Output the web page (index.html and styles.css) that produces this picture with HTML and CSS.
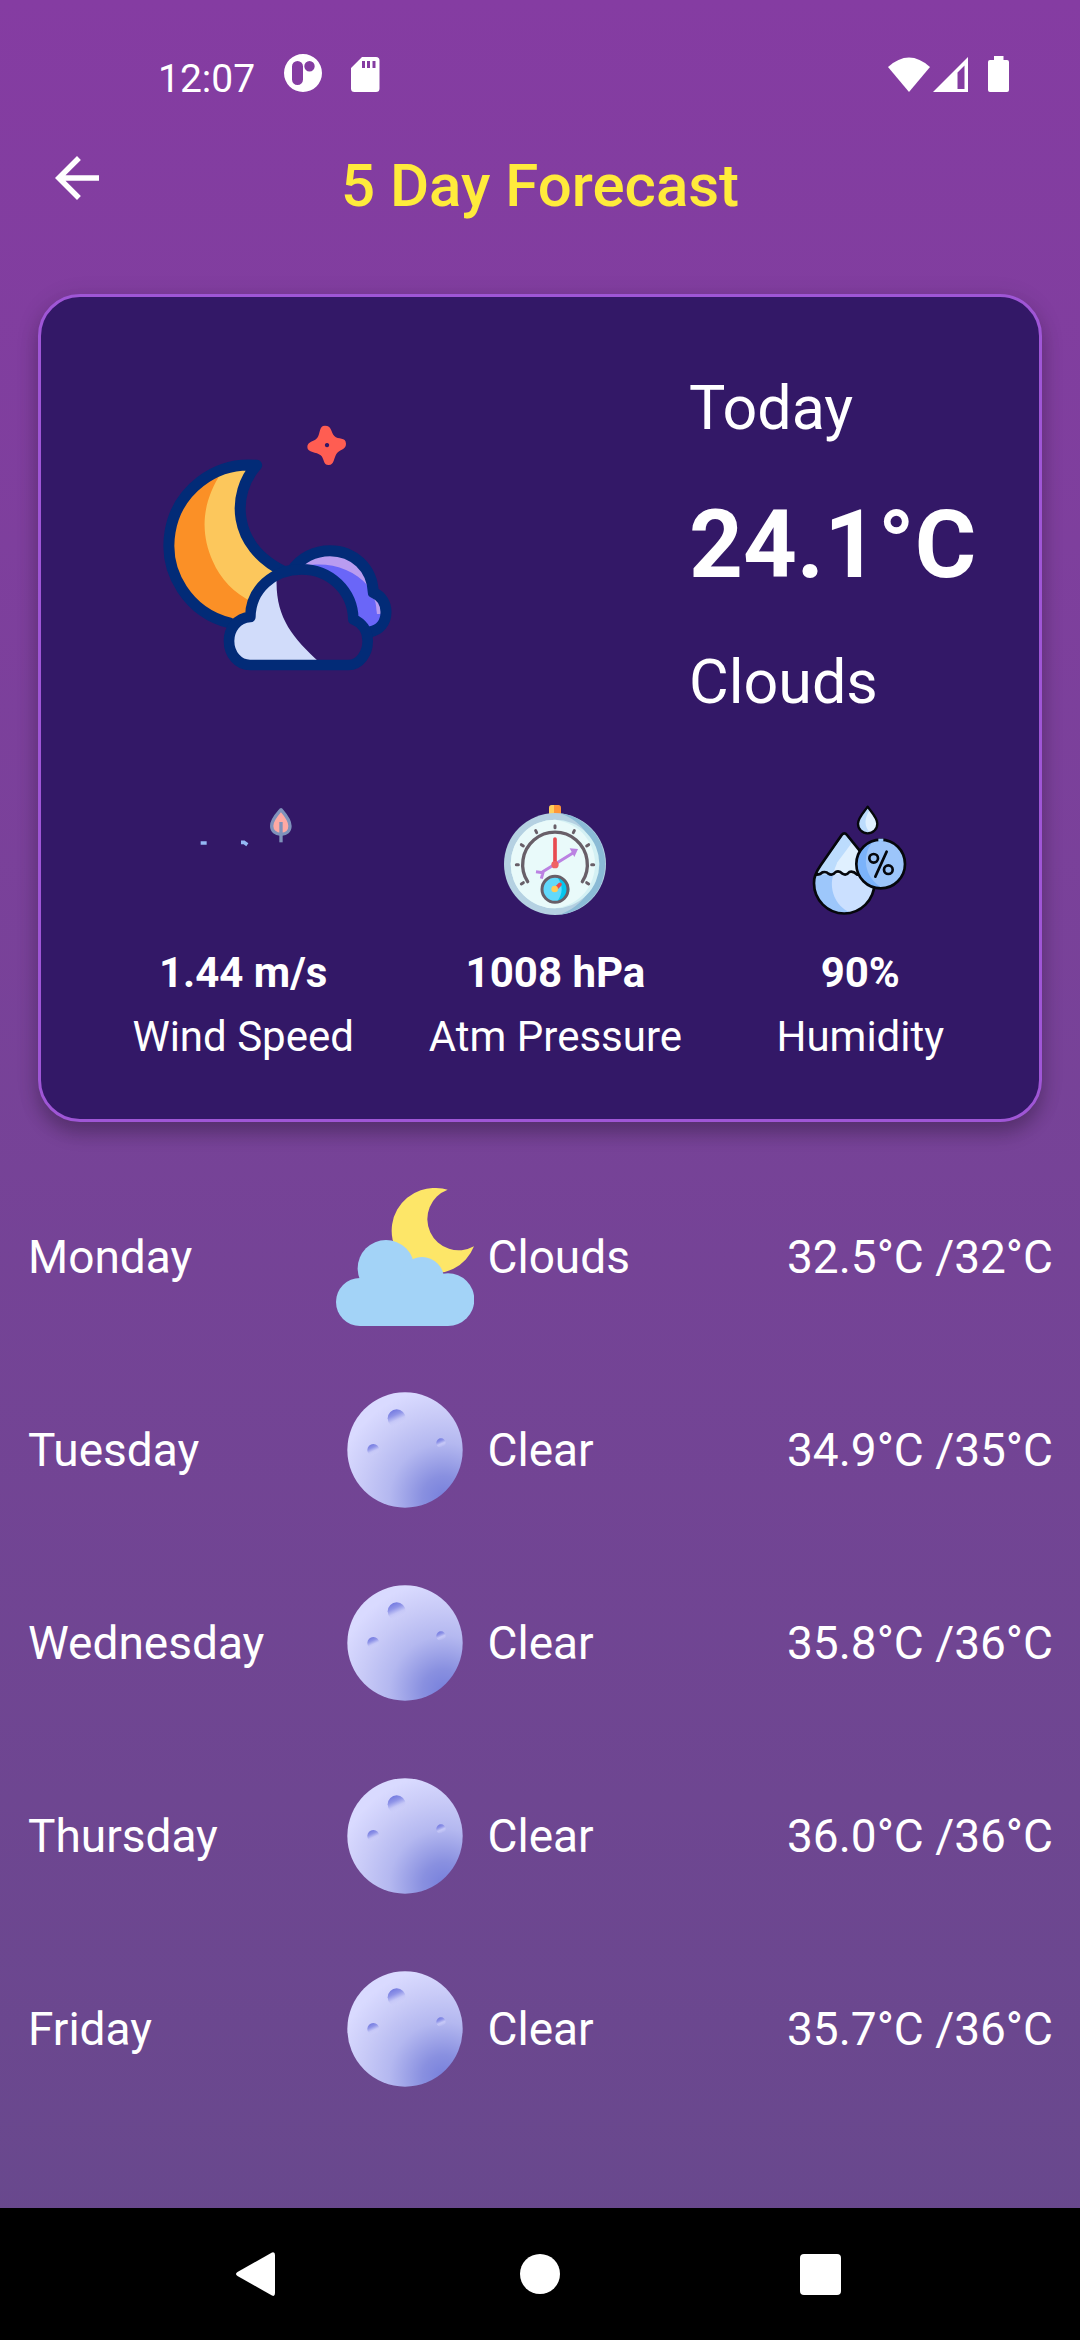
FILE: index.html
```html
<!DOCTYPE html>
<html lang="en">
<head>
  <meta charset="utf-8">
  <meta name="viewport" content="width=device-width, initial-scale=1">
  <title>5 Day Forecast</title>
  <link rel="stylesheet" href="styles.css">
</head>
<body>
  <svg class="sprite" aria-hidden="true">
    <defs>
      <radialGradient id="moon-shade" gradientUnits="userSpaceOnUse" cx="370" cy="985" r="330">
        <stop offset="0" stop-color="#7780dc"/>
        <stop offset="0.2" stop-color="#8990e0"/>
        <stop offset="0.5" stop-color="#b4b8f0"/>
        <stop offset="0.75" stop-color="#c8caf7"/>
        <stop offset="1" stop-color="#d9daff"/>
      </radialGradient>
      <linearGradient id="crater-shade" x1="0.25" y1="0" x2="0.65" y2="0.9">
        <stop offset="0" stop-color="#6f76df"/>
        <stop offset="0.35" stop-color="#8f94e8"/>
        <stop offset="0.65" stop-color="#c5c7f7"/>
        <stop offset="1" stop-color="#cfd0fa" stop-opacity="0"/>
      </linearGradient>
      <symbol id="full-moon" viewBox="45 634 414 414">
        <circle cx="252" cy="841" r="173" fill="url(#moon-shade)"/>
        <circle cx="227" cy="746" r="27" fill="url(#crater-shade)"/>
        <circle cx="157" cy="841" r="18" fill="url(#crater-shade)"/>
        <circle cx="360" cy="820" r="14" fill="url(#crater-shade)"/>
      </symbol>
    </defs>
  </svg>

  <div class="status-bar">
    <div class="status-group status-left">
      <span class="status-time">12:07</span>
      <svg width="40" height="38" viewBox="0 0 40 38" aria-hidden="true">
        <path fill="#fff" fill-rule="evenodd" d="M20 0a19 19 0 1 1 0 38a19 19 0 1 1 0-38zM14.500 7a5.500 5.500 0 0 0-5.500 5.500v13a5.500 5.500 0 0 0 11 0v-13a5.500 5.500 0 0 0-5.500-5.500zM26.500 7a5.200 5.200 0 1 0 0 10.400a5.200 5.200 0 1 0 0-10.400z"/>
      </svg>
      <svg width="29" height="35" viewBox="0 0 29 35" aria-hidden="true">
        <path fill="#fff" fill-rule="evenodd" d="M11 0H25a3.500 3.500 0 0 1 3.500 3.500v28a3.500 3.500 0 0 1-3.500 3.500H3.500a3.500 3.500 0 0 1-3.500-3.500V11zM11 4v7h3V4zM16 4v7h3V4zM21.500 4v7h3V4z"/>
      </svg>
    </div>
    <div class="status-group status-right">
      <svg width="42" height="35" viewBox="0 0 42 35" aria-hidden="true"><path fill="#fff" d="M0 10Q21-9 42 10L21 35z"/></svg>
      <svg width="36" height="35" viewBox="0 0 36 35" aria-hidden="true"><path fill="#fff" fill-rule="evenodd" d="M0 35L35 0v35zM24.500 15.500V32H31.500V8.500z"/></svg>
      <svg class="battery" width="22" height="36" viewBox="0 0 22 36" aria-hidden="true"><path fill="#fff" d="M6 0h9.500v4H19a2 2 0 0 1 2 2v28a2 2 0 0 1-2 2H2a2 2 0 0 1-2-2V6a2 2 0 0 1 2-2h4z"/></svg>
    </div>
  </div>

  <header class="app-bar">
    <button class="back-button" type="button" aria-label="Back">
      <svg width="66" height="66" viewBox="0 0 24 24" aria-hidden="true"><path fill="#fff" d="M20 11H7.830l5.590-5.590L12 4l-8 8 8 8 1.410-1.410L7.830 13H20v-2z"/></svg>
    </button>
    <h1 class="title">5 Day Forecast</h1>
  </header>

  <main class="content">
    <section class="today-card" aria-label="Today">
      <div class="summary">
        <svg class="summary-icon" width="280" height="280" viewBox="0 -13 840 840" aria-hidden="true">
          <defs>
            <clipPath id="crescent"><path d="M350 168C280 250 270 400 435 488L400 680L270 642A240.500 240.500 0 0 1 350 168z"/></clipPath>
          </defs>
          <g clip-path="url(#crescent)">
            <path fill="#fb9026" d="M60 140H480V700H60z"/>
            <path fill="#fcc75c" d="M244 190C185 280 180 370 218 455C242 510 280 550 340 580L480 500L400 150z"/>
          </g>
          <path fill="none" stroke="#022b77" stroke-width="33" stroke-linejoin="round" stroke-linecap="round" d="M270 641A240.500 240.500 0 0 1 350 168C275 250 272 410 435 488"/>
          <path fill="#b99cf0" d="M455 485C480 445 525 424 570 424C640 424 697 475 700 548C725 560 738 582 738 608C738 640 718 662 690 668L600 560z"/>
          <path fill="#6a66f8" d="M490 470C560 455 640 475 684 530L688 562L703 570C710 585 708 600 711 614H735L712 670L660 660L600 520z"/>
          <path fill="none" stroke="#022b77" stroke-width="33" stroke-linejoin="round" d="M455 485C480 445 525 424 570 424C640 424 697 475 700 550C725 560 738 582 738 608C738 640 718 662 690 668"/>
          <path fill="#331867" d="M330 767H625C660 767 683 732 683 695C683 662 665 640 640 630C638 545 570 480 485 480C400 480 332 540 331 623C290 625 267 660 267 695C267 735 295 767 330 767z"/>
          <path fill="#d1dcfa" d="M330 760C290 755 275 725 275 695C275 660 300 630 335 628C338 575 365 535 410 505C405 620 455 685 540 760z"/>
          <path fill="none" stroke="#022b77" stroke-width="32" stroke-linejoin="round" d="M330 767H625C660 767 683 732 683 695C683 662 665 640 640 630C638 545 570 480 485 480C400 480 332 540 331 623C290 625 267 660 267 695C267 735 295 767 330 767z"/>
          <path fill="#ff5d52" fill-rule="evenodd" d="M555 49C576 49 572 68 583 80C594 92 618 82 618 103C618 120 604 118 592 130C580 144 584 167 566 167C548 167 554 148 542 138C530 127 502 131 502 113C502 95 522 98 532 85C542 72 536 49 555 49zM561 101a6.500 6.500 0 1 0 0.100 0z"/>
        </svg>
        <div class="summary-text">
          <h2 class="summary-label">Today</h2>
          <p class="summary-temp">24.1°C</p>
          <p class="summary-label">Clouds</p>
        </div>
      </div>

      <ul class="stats">
        <li class="stat">
          <svg class="stat-icon" width="110" height="110" viewBox="235 78 330 330" aria-hidden="true">
            <path fill="#ffa9a3" stroke="#7f92bb" stroke-width="10" stroke-linejoin="round" d="M514 92C502 106 486 122 486 141C486 156 498 166 514 166C530 166 541 156 541 141C541 122 526 106 514 92z"/>
            <path stroke="#7f92bb" stroke-width="10" d="M514 129V190"/>
            <path fill="none" stroke="#94b8f4" stroke-width="11" d="M273 192H291M394 190H403L413 197"/>
          </svg>
          <strong class="stat-value">1.44 m/s</strong>
          <span class="stat-label">Wind Speed</span>
        </li>
        <li class="stat">
          <svg class="stat-icon" width="110" height="110" viewBox="300 78 330 330" aria-hidden="true">
            <path fill="#ffcf5c" d="M447 108V86Q447 78 455 78H465V108z"/>
            <path fill="#ff963a" d="M462 78H475Q483 78 483 86V108H462z"/>
            <circle cx="465" cy="255" r="153" fill="#b5d1e2"/>
            <path fill="#8bbbd6" d="M480 103A153 153 0 0 1 480 407C625 355 625 155 480 103z"/>
            <circle cx="465" cy="255" r="133" fill="#d4f1f4"/>
            <path fill="#e9fafa" d="M465 122A133 133 0 0 0 465 388C625 365 625 145 465 122z"/>
            <g fill="none" stroke="#685f68" stroke-linecap="round">
              <path stroke-width="10" d="M383 308A97 97 0 1 1 547 308"/>
              <path stroke-width="9" d="M465 140V146M407 155L410 161M523 155L520 161M364 197L370 201M566 197L560 201M349 257H355M575 257H581M364 315L370 311M566 315L560 311"/>
            </g>
            <path fill="none" stroke="#bb82e2" stroke-width="9" d="M427 279L520 221M408 278L429 281L424 299"/>
            <path fill="#bb82e2" d="M509 208L534 210L523 234z"/>
            <path stroke="#e84b50" stroke-width="11" stroke-linecap="round" d="M465 180V255"/>
            <circle cx="465" cy="257" r="11" fill="#ef6265"/>
            <circle cx="465" cy="331" r="38" fill="#61d9fb"/>
            <path fill="#05c5ed" d="M470 293A38 38 0 0 1 470 369C490 345 490 315 470 293z"/>
            <circle cx="465" cy="331" r="39" fill="none" stroke="#685f68" stroke-width="9"/>
            <path stroke="#e84b50" stroke-width="11" stroke-linecap="round" d="M468 328L480 316"/>
            <circle cx="464" cy="330" r="10" fill="#ffcb57"/>
          </svg>
          <strong class="stat-value">1008 hPa</strong>
          <span class="stat-label">Atm Pressure</span>
        </li>
        <li class="stat">
          <svg class="stat-icon" width="110" height="110" viewBox="193 78 330 330" aria-hidden="true">
            <path fill="#bcdcfd" d="M311 163L235 268Q225 290 228 290H370L355 215z"/>
            <path fill="#e0f0ff" d="M337 187L290 250Q280 270 278 290H370L355 215z"/>
            <path fill="#9dc7fb" d="M222 287H395Q401 305 401 314A90.500 90.500 0 0 1 220 314z"/>
            <path fill="#cbe0ff" d="M278 287H395Q401 305 401 314C401 355 370 392 330 401C280 380 265 325 278 287z"/>
            <path fill="none" stroke="#05070c" stroke-width="8" stroke-linejoin="round" stroke-linecap="round" d="M357 215L319 168Q311 158 303 168L240 259C222 285 219 300 220 313A90.500 90.500 0 0 0 401 313M228 287Q240 287 245 280Q257 277 263 284Q275 292 285 279Q296 274 305 284Q317 291 326 279Q337 275 350 287"/>
            <circle cx="420" cy="255" r="72" fill="#9cc5fa"/>
            <path fill="#7bb3fb" d="M396 188A72 72 0 0 0 425 327C370 295 362 230 396 188z"/>
            <circle cx="420" cy="255" r="73" fill="none" stroke="#05070c" stroke-width="8"/>
            <path fill="#9cc9ff" d="M413 179H428V188H413z"/>
            <g fill="none" stroke="#05070c" stroke-width="8" stroke-linecap="round">
              <circle cx="399" cy="238" r="13"/><circle cx="443" cy="272" r="13"/><path d="M438 218L404 293"/>
            </g>
            <path fill="#bcdcfd" d="M381 83C370 99 352 116 352 134A29 29 0 0 0 410 134C410 116 392 99 381 83z"/>
            <path fill="#e0f0ff" d="M388 93C370 115 370 145 388 160A29 29 0 0 0 410 134C410 116 398 105 388 93z"/>
            <path fill="none" stroke="#05070c" stroke-width="7" stroke-linejoin="round" d="M381 83C370 99 352 116 352 134A29 29 0 0 0 410 134C410 116 392 99 381 83z"/>
          </svg>
          <strong class="stat-value">90%</strong>
          <span class="stat-label">Humidity</span>
        </li>
      </ul>
    </section>

    <ul class="forecast">
      <li class="day">
        <span class="day-name">Monday</span>
        <svg class="day-icon" width="138" height="138" viewBox="45 53 414 414" aria-hidden="true">
          <path fill="#fde668" d="M380 58A94 94 0 1 0 459 228A128 128 0 1 1 345 53Q366 53 380 58z"/>
          <g fill="#a3d3f7">
            <circle cx="117" cy="395" r="72"/><circle cx="195" cy="294" r="85"/><circle cx="303" cy="326" r="66"/><circle cx="381" cy="388" r="79"/>
            <path d="M117 320H381V467H117z"/>
          </g>
        </svg>
        <span class="day-sky">Clouds</span>
        <span class="day-temp">32.5°C /32°C</span>
      </li>
      <li class="day">
        <span class="day-name">Tuesday</span>
        <svg class="day-icon" width="138" height="138" aria-hidden="true"><use href="#full-moon"/></svg>
        <span class="day-sky">Clear</span>
        <span class="day-temp">34.9°C /35°C</span>
      </li>
      <li class="day">
        <span class="day-name">Wednesday</span>
        <svg class="day-icon" width="138" height="138" aria-hidden="true"><use href="#full-moon"/></svg>
        <span class="day-sky">Clear</span>
        <span class="day-temp">35.8°C /36°C</span>
      </li>
      <li class="day">
        <span class="day-name">Thursday</span>
        <svg class="day-icon" width="138" height="138" aria-hidden="true"><use href="#full-moon"/></svg>
        <span class="day-sky">Clear</span>
        <span class="day-temp">36.0°C /36°C</span>
      </li>
      <li class="day">
        <span class="day-name">Friday</span>
        <svg class="day-icon" width="138" height="138" aria-hidden="true"><use href="#full-moon"/></svg>
        <span class="day-sky">Clear</span>
        <span class="day-temp">35.7°C /36°C</span>
      </li>
    </ul>
  </main>

  <nav class="system-nav" aria-label="System">
    <button class="nav-button" type="button" aria-label="Back">
      <svg width="66" height="66" viewBox="0 0 66 66" aria-hidden="true"><path fill="#fff" d="M10.500 31L45 11.500Q48 10.500 48 14V52Q48 56 45 54.500L10.500 35Q7.500 33 10.500 31z"/></svg>
    </button>
    <button class="nav-button" type="button" aria-label="Home">
      <svg width="66" height="66" viewBox="0 0 66 66" aria-hidden="true"><circle cx="33" cy="33" r="20" fill="#fff"/></svg>
    </button>
    <button class="nav-button" type="button" aria-label="Recent apps">
      <svg width="66" height="66" viewBox="0 0 66 66" aria-hidden="true"><rect x="13" y="13" width="41" height="41" rx="4" fill="#fff"/></svg>
    </button>
  </nav>
</body>
</html>
```

FILE: styles.css
```css
* {
  box-sizing: border-box;
}

body {
  margin: 0;
  min-height: 100vh;
  display: flex;
  flex-direction: column;
  background: linear-gradient(#853ca2, #67498c);
  color: #fff;
  font-family: Roboto, "Noto Sans", sans-serif;
}

h1,
h2,
p,
ul {
  margin: 0;
  padding: 0;
  font-weight: 400;
}

ul {
  list-style: none;
}

button {
  padding: 0;
  border: 0;
  background: none;
  color: inherit;
}

button svg {
  display: block;
}

.sprite {
  position: absolute;
  width: 0;
  height: 0;
}

/* Status bar */
.status-bar {
  display: flex;
  justify-content: space-between;
  align-items: baseline;
  padding: 54px 70px 0 158px;
}

.status-group {
  display: flex;
  align-items: baseline;
}

.status-left {
  gap: 28px;
}

.status-right {
  gap: 3px;
}

.status-time {
  font-size: 39px;
  line-height: 48px;
}

.battery {
  margin-left: 16px;
}

/* App bar */
.app-bar {
  display: grid;
  grid-template-columns: 66px 1fr 66px;
  min-height: 75px;
  margin: 42px 44px 74px;
}

.back-button {
  align-self: start;
}

.title {
  align-self: end;
  text-align: center;
  color: #ffeb3b;
  font-size: 60px;
  line-height: 68px;
  font-weight: 500;
}

/* Today */
.today-card {
  margin: 0 38px;
  padding: 75px 0 58px;
  background: #331867;
  border: 3px solid #9f56d6;
  border-radius: 42px;
  box-shadow: 0 12px 18px rgba(0, 0, 0, 0.22), 0 3px 24px rgba(0, 0, 0, 0.1);
}

.summary {
  display: grid;
  grid-template-columns: 1fr 350px;
  align-items: center;
  padding-left: 99px;
}

.summary-text {
  display: grid;
  gap: 45px;
}

.summary-label {
  font-size: 61px;
  line-height: 72px;
}

.summary-temp {
  font-size: 94px;
  line-height: 112px;
  font-weight: 700;
}

.stats {
  display: grid;
  grid-template-columns: 21fr 21fr 20fr;
  padding: 87px 30px 0 46px;
}

.stat {
  display: flex;
  flex-direction: column;
  align-items: center;
  gap: 16px;
  font-size: 42px;
  line-height: 48px;
}

.stat-icon {
  margin-bottom: 18px;
}

.stat-value {
  font-weight: 700;
}

/* Daily list */
.forecast {
  display: grid;
  gap: 55px;
  padding: 66px 27px 66px 28px;
}

.day {
  display: grid;
  grid-template-columns: 30% 138px 1fr auto;
  align-items: center;
  font-size: 46px;
  line-height: 54px;
}

.day-sky {
  padding-left: 14px;
}

/* System navigation */
.system-nav {
  display: flex;
  justify-content: center;
  align-items: center;
  gap: 214px;
  height: 132px;
  margin-top: auto;
  background: #000;
}
```
